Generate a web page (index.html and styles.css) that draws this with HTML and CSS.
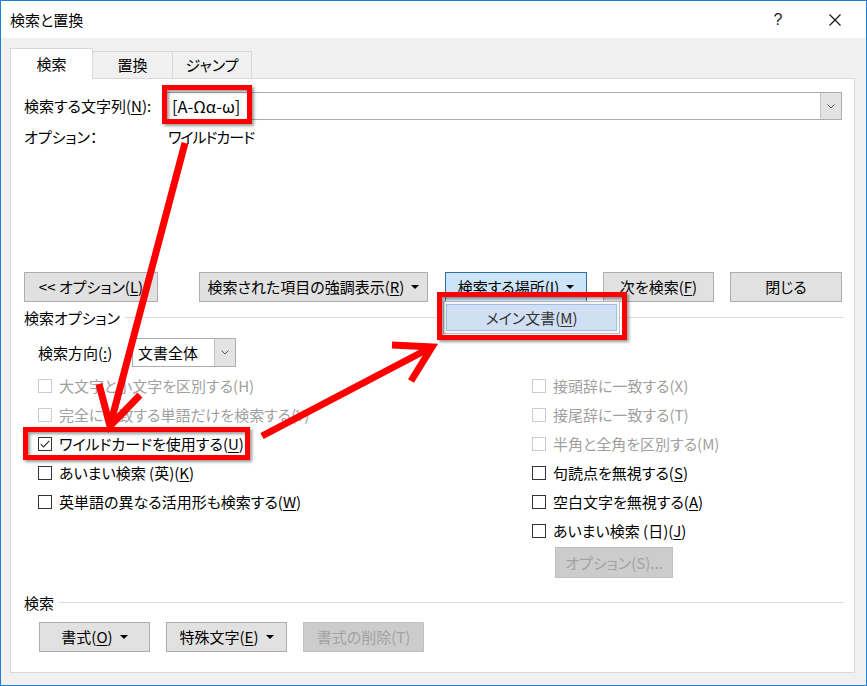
FILE: index.html
```html
<!DOCTYPE html>
<html lang="ja">
<head>
<meta charset="utf-8">
<title>検索と置換</title>
<link rel="stylesheet" href="styles.css">
</head>
<body>
<div class="screen">
  <div class="window">
    <div class="titlebar">
      <span class="title">検索と置換</span>
      <span class="help">?</span>
      <span class="close"><svg width="12" height="12" viewBox="0 0 12 12"><path d="M0.5 0.5 L11.5 11.5 M11.5 0.5 L0.5 11.5" stroke="#111" stroke-width="1.1" fill="none"/></svg></span>
    </div>
    <div class="client">
      <div class="tabs">
        <div class="tab active t1">検索</div>
        <div class="tab t2">置換</div>
        <div class="tab t3">ジャンプ</div>
      </div>
      <div class="panel">
        <div class="find-row">
          <span class="find-label">検索する文字列(<u>N</u>):</span>
          <div class="combo">
            <div class="combo-text">[A-Ωα-ω]</div>
            <div class="combo-btn"><svg width="8" height="5" viewBox="0 0 8 5"><path d="M0.5 0.5 L4 4 L7.5 0.5" stroke="#555" stroke-width="1" fill="none"/></svg></div>
          </div>
        </div>
        <div class="opt-row">
          <span class="opt-label">オプション：</span>
          <span class="opt-value">ワイルドカード</span>
        </div>
        <div class="btn-row">
          <div class="btn b1"><span>&lt;&lt; オプション(<u>L</u>)</span></div>
          <div class="btn b2"><span>検索された項目の強調表示(<u>R</u>)</span><span class="caret"></span></div>
          <div class="btn b3 pressed"><span>検索する場所(<u>I</u>)</span><span class="caret"></span></div>
          <div class="btn b4"><span>次を検索(<u>F</u>)</span></div>
          <div class="btn b5"><span>閉じる</span></div>
        </div>
        <div class="section-head">
          <span>検索オプション</span>
          <div class="rule"></div>
        </div>
        <div class="dir-row">
          <span class="dir-label">検索方向(<u>:</u>)</span>
          <div class="select">
            <div class="select-text">文書全体</div>
            <div class="select-btn"><svg width="8" height="5" viewBox="0 0 8 5"><path d="M0.5 0.5 L4 4 L7.5 0.5" stroke="#555" stroke-width="1" fill="none"/></svg></div>
          </div>
        </div>
        <div class="checks">
          <div class="col left">
            <div class="check disabled"><span class="box"></span><span>大文字と小文字を区別する(H)</span></div>
            <div class="check disabled"><span class="box"></span><span>完全に一致する単語だけを検索する(Y)</span></div>
            <div class="check"><span class="box"><svg width="12" height="12" viewBox="0 0 12 12"><path d="M1.8 6.2 L4.6 9 L10.2 2.8" stroke="#333" stroke-width="1.2" fill="none"/></svg></span><span>ワイルドカードを使用する(<u>U</u>)</span></div>
            <div class="check"><span class="box"></span><span>あいまい検索 (英)(<u>K</u>)</span></div>
            <div class="check"><span class="box"></span><span>英単語の異なる活用形も検索する(<u>W</u>)</span></div>
          </div>
          <div class="col right">
            <div class="check disabled"><span class="box"></span><span>接頭辞に一致する(X)</span></div>
            <div class="check disabled"><span class="box"></span><span>接尾辞に一致する(T)</span></div>
            <div class="check disabled"><span class="box"></span><span>半角と全角を区別する(M)</span></div>
            <div class="check"><span class="box"></span><span>句読点を無視する(<u>S</u>)</span></div>
            <div class="check"><span class="box"></span><span>空白文字を無視する(<u>A</u>)</span></div>
            <div class="check"><span class="box"></span><span>あいまい検索 (日)(<u>J</u>)</span></div>
            <div class="btn disabled opt-btn"><span>オプション(S)...</span></div>
          </div>
        </div>
        <div class="section-head bottom-head">
          <span>検索</span>
          <div class="rule"></div>
        </div>
        <div class="btn-row bottom-row">
          <div class="btn c1"><span>書式(<u>O</u>)</span><span class="caret"></span></div>
          <div class="btn c2"><span>特殊文字(<u>E</u>)</span><span class="caret"></span></div>
          <div class="btn c3 disabled"><span>書式の削除(T)</span></div>
        </div>
      </div>
    </div>
  </div>

  <div class="menu">
    <div class="menu-item">メイン文書(<u>M</u>)</div>
  </div>

  <svg class="annot" width="867" height="686" viewBox="0 0 867 686">
    <defs>
      <filter id="sh" x="-20%" y="-40%" width="140%" height="180%">
        <feDropShadow dx="2" dy="2" stdDeviation="1.5" flood-color="#000" flood-opacity="0.4"/>
      </filter>
    </defs>
    <g fill="none" stroke="#ff0000" stroke-width="5" filter="url(#sh)">
      <rect x="164.5" y="87.5" width="85" height="34"/>
      <rect x="439.5" y="294.5" width="185" height="43"/>
      <rect x="25.5" y="429.5" width="222" height="28"/>
    </g>
    <g fill="none" stroke="#ff0000" stroke-width="7">
      <line x1="185" y1="143" x2="111" y2="422"/>
      <polyline points="99,384 110,426 140,395" stroke-linejoin="miter"/>
      <line x1="262" y1="436" x2="428" y2="349"/>
      <polyline points="392,345 432,347 411,381" stroke-linejoin="miter"/>
    </g>
  </svg>
</div>
</body>
</html>
```

FILE: styles.css
```css
body {
  margin: 0;
  font-family: "Noto Sans CJK JP", "Noto Sans", sans-serif;
  font-size: 15px;
  font-feature-settings: "palt";
  color: #000;
  line-height: 20px;
}

u {
  text-decoration: underline;
  text-underline-offset: 2px;
  text-decoration-thickness: 1px;
}

.screen {
  position: relative;
  width: 867px;
  height: 686px;
  overflow: hidden;
  background: #fff;
}

.window {
  width: 867px;
  height: 686px;
  box-sizing: border-box;
  border: 1px solid #1b80d6;
  display: flex;
  flex-direction: column;
}

.titlebar {
  height: 37px;
  flex: none;
  background: #fff;
  display: flex;
  align-items: center;
}

.title {
  flex: 1;
  padding-left: 9px;
}

.help {
  width: 52px;
  text-align: center;
  font-family: "Liberation Sans", sans-serif;
  font-size: 16px;
  color: #222;
}

.close {
  width: 62px;
  display: flex;
  justify-content: center;
  padding-top: 1px;
}

.client {
  flex: 1;
  background: #f0f0f0;
  padding: 10px 11px 0 9px;
}

.tabs {
  display: flex;
  align-items: flex-end;
  height: 30px;
}

.tab {
  box-sizing: border-box;
  height: 27px;
  border: 1px solid #d9d9d9;
  border-bottom: none;
  background: #f0f0f0;
  text-align: center;
  line-height: 26px;
  margin-left: -1px;
}

.tab.active {
  position: relative;
  z-index: 1;
  height: 31px;
  line-height: 30px;
  margin-bottom: -1px;
  margin-left: 0;
  background: #fff;
}

.t1 { width: 83px; }
.t2 { width: 81px; }
.t3 { width: 80px; }

.panel {
  box-sizing: border-box;
  width: 845px;
  height: 595px;
  border: 1px solid #d9d9d9;
  background: #fff;
  padding: 13px 10px 0 13px;
}

.find-row {
  display: grid;
  grid-template-columns: 141px 677px;
  align-items: center;
  height: 28px;
}

.combo {
  box-sizing: border-box;
  height: 28px;
  border: 1px solid #adadad;
  display: flex;
}

.combo-text {
  flex: 1;
  padding-left: 6px;
  line-height: 26px;
  font-size: 16.5px;
}

.combo-btn {
  width: 20px;
  background: #e3e3e3;
  border-left: 1px solid #c4c4c4;
  display: flex;
  align-items: center;
  justify-content: center;
}

.opt-row {
  margin-top: 7px;
  display: flex;
}

.opt-label {
  width: 144px;
}

.opt-value {
  letter-spacing: -1px;
}

.btn-row {
  margin-top: 125px;
  display: flex;
  height: 30px;
}

.btn {
  box-sizing: border-box;
  height: 30px;
  border: 1px solid #adadad;
  background: #e1e1e1;
  display: flex;
  align-items: center;
  justify-content: center;
  gap: 7px;
  white-space: nowrap;
}

.btn.pressed {
  background: #cce4f7;
  border-color: #2f6ea5;
}

.btn.disabled {
  background: #cccccc;
  border-color: #bfbfbf;
  color: #a3a3a3;
}

.caret {
  width: 0;
  height: 0;
  border-left: 4px solid transparent;
  border-right: 4px solid transparent;
  border-top: 4px solid #000;
}

.b1 { width: 134px; }
.b2 { width: 229px; margin-left: 41px; }
.b3 { width: 142px; margin-left: 17px; }
.b4 { width: 111px; margin-left: 16px; }
.b5 { width: 112px; margin-left: 16px; }

.section-head {
  margin-top: 6px;
  display: flex;
  align-items: center;
  height: 20px;
}

.rule {
  flex: 1;
  height: 1px;
  background: #dcdcdc;
  margin-left: 5px;
  margin-top: -1px;
}

.dir-row {
  margin-top: 10px;
  display: flex;
  align-items: center;
  padding-left: 14px;
}

.dir-label {
  width: 94px;
}

.select {
  box-sizing: border-box;
  width: 104px;
  height: 29px;
  border: 1px solid #adadad;
  display: flex;
}

.select-text {
  flex: 1;
  padding-left: 5px;
  line-height: 27px;
}

.select-btn {
  width: 20px;
  background: #e3e3e3;
  border-left: 1px solid #c4c4c4;
  display: flex;
  align-items: center;
  justify-content: center;
}

.checks {
  margin-top: 4px;
  display: flex;
  padding-left: 14px;
}

.col.left {
  width: 494px;
}

.check {
  height: 29px;
  display: flex;
  align-items: center;
  white-space: nowrap;
}

.box {
  box-sizing: border-box;
  width: 14px;
  height: 14px;
  border: 1px solid #333;
  background: #fff;
  margin-right: 7px;
  display: flex;
  align-items: center;
  justify-content: center;
  flex: none;
}

.check.disabled {
  color: #a0a0a0;
}

.check.disabled .box {
  border-color: #cccccc;
}

.opt-btn {
  margin-top: 2px;
  margin-left: 23px;
  width: 118px;
  height: 31px;
}

.bottom-head {
  margin-top: 15px;
}

.bottom-row {
  margin-top: 9px;
  padding-left: 15px;
}

.c1 { width: 111px; }
.c2 { width: 121px; margin-left: 16px; }
.c3 { width: 121px; margin-left: 16px; }

.menu {
  position: absolute;
  left: 443px;
  top: 301px;
  box-sizing: border-box;
  width: 177px;
  height: 33px;
  border: 1px solid #bcbcbc;
  background: #f7f7f7;
  padding: 2px;
}

.menu-item {
  box-sizing: border-box;
  height: 27px;
  border: 1px solid #9fbde8;
  background: #d1dff3;
  text-align: center;
  line-height: 25px;
  color: #333;
}

.annot {
  position: absolute;
  left: 0;
  top: 0;
  pointer-events: none;
}
```
